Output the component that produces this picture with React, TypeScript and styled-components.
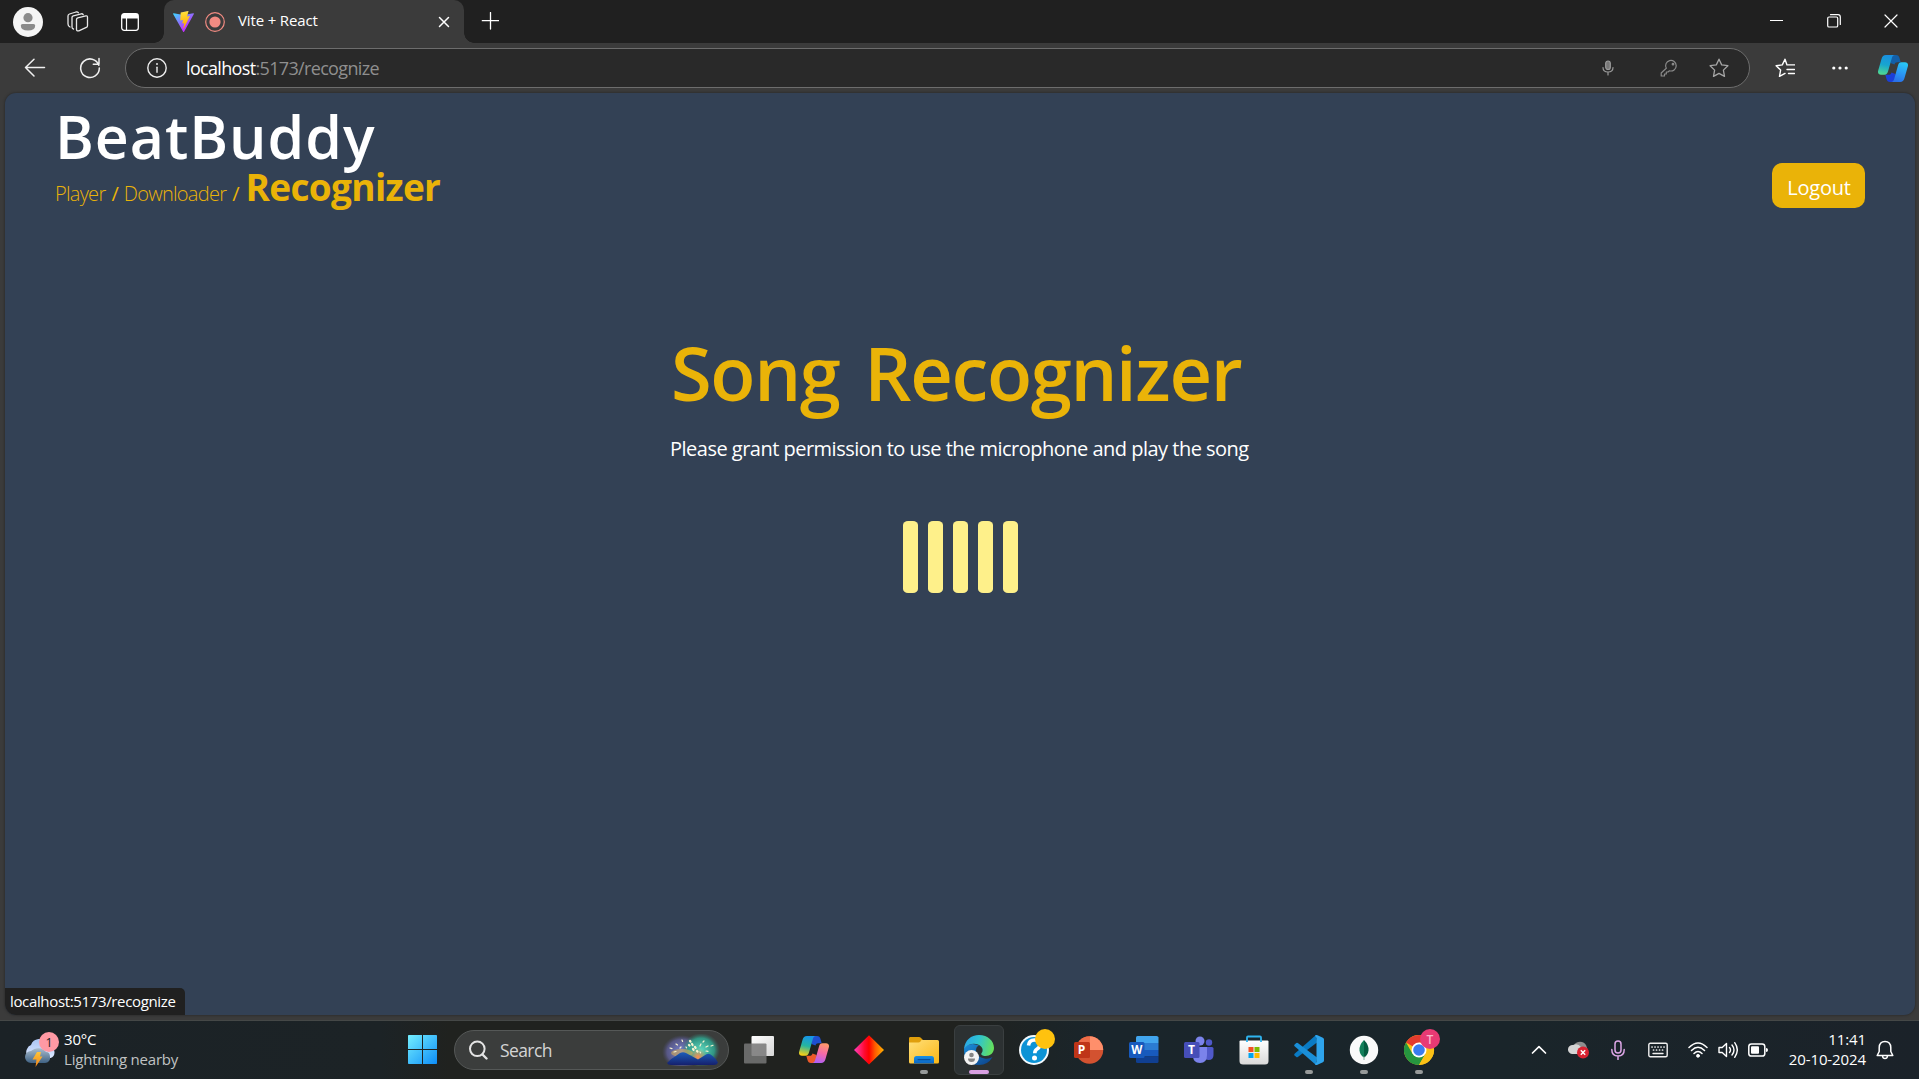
import React from 'react';
import styled, { createGlobalStyle } from 'styled-components';

const GlobalStyle = createGlobalStyle`
  * { box-sizing: border-box; }
  html, body { margin: 0; padding: 0; background: #3b3b3b; overflow: hidden; }
  body { font-family: "Open Sans", "Noto Sans", sans-serif; color: #fff; }
  svg { display: block; flex: none; }
`;

const Screen = styled.div`
  width: 1919px;
  height: 1079px;
  display: flex;
  flex-direction: column;
  background: #3b3b3b;
`;

/* ---------- browser chrome ---------- */

const TabStrip = styled.div`
  height: 43px;
  flex: none;
  background: #202020;
  display: flex;
  align-items: center;
`;

const StripTools = styled.div`
  width: 164px;
  height: 42px;
  padding-left: 13px;
  display: flex;
  align-items: center;
`;

const Tab = styled.div`
  width: 300px;
  height: 43px;
  background: #3b3b3b;
  border-radius: 10px 10px 0 0;
  display: flex;
  align-items: center;
  padding: 0 13px 0 9px;
  position: relative;
  &::before, &::after {
    content: "";
    position: absolute;
    bottom: 0;
    width: 10px;
    height: 10px;
  }
  &::before { left: -10px; background: radial-gradient(circle at 0 0, #202020 9.5px, #3b3b3b 10px); }
  &::after { right: -10px; background: radial-gradient(circle at 100% 0, #202020 9.5px, #3b3b3b 10px); }
`;

const TabTitle = styled.span`
  flex: 1;
  margin-left: 13px;
  padding-bottom: 3px;
  font-size: 15px;
  line-height: 20px;
  letter-spacing: -0.15px;
`;

const WindowControls = styled.div`
  margin-left: auto;
  display: flex;
  gap: 43.500px;
  padding-right: 21px;
  padding-bottom: 1px;
`;

const Toolbar = styled.div`
  height: 50px;
  flex: none;
  display: flex;
  align-items: center;
  padding: 0 10px 0 24px;
`;

const AddressBar = styled.div`
  width: 1625px;
  height: 40px;
  margin-left: 24px;
  border: 1px solid #6d6d6d;
  border-radius: 20px;
  background: #292929;
  display: flex;
  align-items: center;
  padding: 0 20px 0 21px;
`;

const Url = styled.span`
  flex: 1;
  margin-left: 19px;
  padding-bottom: 1px;
  font-size: 18px;
  line-height: 26px;
  letter-spacing: -0.66px;
  color: #8f8f8f;
  b { font-weight: 400; color: #fff; }
`;

const Gap = styled.span<{ $w: number }>`
  flex: none;
  width: ${(p) => p.$w}px;
`;

/* ---------- web page ---------- */

const Page = styled.div`
  width: 1910px;
  height: 922px;
  margin-left: 5px;
  flex: none;
  background: #334155;
  border-radius: 11px;
  box-shadow: 0 0 3px rgba(0, 0, 0, 0.4);
  display: flex;
  flex-direction: column;
  overflow: hidden;
`;

const Header = styled.header`
  display: flex;
  justify-content: space-between;
  align-items: flex-start;
  padding: 13px 50px 0 50px;
`;

const Brand = styled.h1`
  margin: 0;
  font-size: 59px;
  line-height: 60px;
  font-weight: 600;
  letter-spacing: 0.95px;
`;

const Crumbs = styled.nav`
  height: 44px;
  margin-top: -1px;
  display: flex;
  align-items: baseline;
  color: #eab308;
  font-size: 20px;
  line-height: 20px;
`;

const Crumb = styled.a`
  font-weight: 300;
  letter-spacing: -0.72px;
`;

const Slash = styled.span`
  margin: 0 5px 0 6px;
  font-weight: 500;
`;

const ActiveCrumb = styled.a`
  margin-left: 1px;
  font-size: 37px;
  line-height: 44px;
  font-weight: 700;
  letter-spacing: -0.68px;
`;

const Logout = styled.button`
  margin: 57px 0 0;
  padding: 4px 0 0 1px;
  width: 93px;
  height: 45px;
  border: 0;
  border-radius: 10px;
  background: #eab308;
  color: #fff;
  font: inherit;
  font-size: 20px;
  line-height: 28px;
  letter-spacing: -0.25px;
`;

const Main = styled.main`
  width: 578px;
  margin: 124px auto 0;
  display: flex;
  flex-direction: column;
`;

const Title = styled.h2`
  margin: 0;
  color: #eab308;
  font-size: 74px;
  line-height: 80px;
  font-weight: 600;
  white-space: nowrap;
  letter-spacing: -1.35px;
  word-spacing: 7px;
`;

const Hint = styled.p`
  margin: 22px 0 0 -1px;
  font-size: 20px;
  line-height: 28px;
  white-space: nowrap;
  letter-spacing: -0.51px;
`;

const Bars = styled.div`
  margin: 58px auto 0;
  display: flex;
  gap: 10px;
`;

const Bar = styled.i`
  width: 15px;
  height: 72px;
  border-radius: 5px / 4px;
  background: #fef08a;
`;

const StatusBubble = styled.div`
  width: 180px;
  height: 27px;
  margin: auto 0 0;
  padding-left: 5px;
  background: #202020;
  border-radius: 0 5px 0 0;
  font-size: 15px;
  line-height: 27px;
  letter-spacing: -0.35px;
`;

/* ---------- taskbar ---------- */

const Taskbar = styled.div`
  margin-top: 5px;
  height: 59px;
  flex: none;
  display: flex;
  align-items: center;
  padding-bottom: 1px;
  border-top: 1px solid #454847;
  background: linear-gradient(90deg, #1b2226 0, #1c2326 380px, #20221f 450px, #20221f 960px, #1a252b 1100px, #1a252a 1500px, #1b2229 100%);
`;

const Weather = styled.div`
  width: 408px;
  display: flex;
  align-items: center;
  padding-left: 24px;
`;

const WeatherText = styled.div`
  display: flex;
  flex-direction: column;
  margin-left: 4px;
  padding-bottom: 2px;
  font-size: 15px;
  line-height: 20px;
  letter-spacing: -0.2px;
  small { font-size: 15px; color: #c0c2c3; }
`;

const SearchBox = styled.div`
  width: 275px;
  height: 40px;
  margin: 0 5px 0 17px;
  border: 1px solid #555857;
  border-radius: 20px;
  background: #3b3d3c;
  display: flex;
  align-items: center;
  padding: 0 8px 0 13px;
`;

const SearchText = styled.span`
  flex: 1;
  margin-left: 12px;
  font-size: 17.5px;
  line-height: 24px;
  letter-spacing: -0.6px;
  color: #d4d4d4;
`;

const AppButton = styled.div<{ $active?: boolean }>`
  width: 50px;
  height: 50px;
  margin: 0 5px 0 0;
  border-radius: 6px;
  border: 1px solid ${(p) => (p.$active ? '#3a3f40' : 'transparent')};
  background: ${(p) => (p.$active ? '#2c3132' : 'transparent')};
  display: flex;
  flex-direction: column;
  align-items: center;
  padding-top: 8px;
`;

const Running = styled.i<{ $active?: boolean }>`
  width: ${(p) => (p.$active ? 20 : 8)}px;
  height: 4px;
  margin-top: 4px;
  border-radius: 2px;
  background: ${(p) => (p.$active ? '#d9a0e2' : '#979a9a')};
`;

const Tray = styled.div`
  margin-left: auto;
  display: flex;
  align-items: center;
  padding-right: 25px;
`;

const Clock = styled.div`
  width: 88px;
  margin: 0 10px 0 10px;
  padding-bottom: 2px;
  text-align: right;
  font-size: 15px;
  line-height: 20px;
  letter-spacing: -0.1px;
  white-space: nowrap;
  display: flex;
  flex-direction: column;
`;

const BadgeText = styled.text`
  font-family: "Open Sans", sans-serif;
  text-anchor: middle;
`;

/* ---------- icons ---------- */

const ribbon = 'M8 0h9c-2 0-2.700 1.500-3.300 3.500L10 16.500c-.6 2-1.500 3.200-3.500 3.200H3c-2.500 0-3.500-1.800-2.800-4.200L3.500 4C4.200 1.500 5.500 0 8 0z';
const fold = 'M12 0h6c2 0 3 1 3.500 3l1.200 4.300h-3.500c-1.500 0-2.200.8-2.700 2.300L12.500 8z';

const Copilot = ({ id, colours }: { id: string; colours: string[] }) => (
  <svg width="30" height="27" viewBox="0 0 30 27">
    <defs>
      <linearGradient id={id + 'a'} x1=".5" y1="0" x2=".3" y2="1">
        <stop offset="0" stopColor={colours[0]} /><stop offset=".5" stopColor={colours[1]} /><stop offset="1" stopColor={colours[2]} />
      </linearGradient>
      <linearGradient id={id + 'b'} x1=".3" y1="1" x2=".6" y2="0">
        <stop offset="0" stopColor={colours[3]} /><stop offset=".5" stopColor={colours[4]} /><stop offset="1" stopColor={colours[5]} />
      </linearGradient>
    </defs>
    <path d={fold} fill={colours[6]} />
    <path d={fold} fill={colours[7]} transform="rotate(180 15 13.500)" />
    <path d={ribbon} fill={`url(#${id}a)`} />
    <path d={ribbon} fill={`url(#${id}b)`} transform="rotate(180 15 13.500)" />
  </svg>
);

const Vite = () => (
  <svg width="21" height="21" viewBox="0 0 256 257">
    <defs>
      <linearGradient id="vA" x1="-.8%" x2="57.600%" y1="7.600%" y2="78.400%"><stop offset="0" stopColor="#41D1FF" /><stop offset="1" stopColor="#BD34FE" /></linearGradient>
      <linearGradient id="vB" x1="43.400%" x2="50.300%" y1="2.200%" y2="89%"><stop offset="0" stopColor="#FFEA83" /><stop offset=".08" stopColor="#FFDD35" /><stop offset="1" stopColor="#FFA800" /></linearGradient>
    </defs>
    <path fill="url(#vA)" d="M255.153 37.938L134.897 252.976c-2.483 4.440-8.862 4.466-11.382.048L.875 37.958c-2.746-4.814 1.371-10.646 6.827-9.670l120.385 21.517a6.537 6.537 0 0 0 2.322-.004l117.867-21.483c5.438-.991 9.574 4.796 6.877 9.620Z" />
    <path fill="url(#vB)" d="M185.432.063L96.440 17.501a3.268 3.268 0 0 0-2.634 3.014l-5.474 92.456a3.268 3.268 0 0 0 3.997 3.378l24.777-5.718c2.318-.535 4.413 1.507 3.936 3.838l-7.361 36.047c-.495 2.426 1.782 4.500 4.151 3.780l15.304-4.649c2.372-.720 4.652 1.360 4.150 3.788l-11.698 56.621c-.732 3.542 3.979 5.473 5.943 2.437l1.313-2.028l72.516-144.720c1.215-2.423-.880-5.186-3.540-4.672l-25.505 4.922c-2.396.462-4.435-1.770-3.759-4.114l16.646-57.705c.677-2.350-1.370-4.583-3.769-4.113Z" />
  </svg>
);

const Line = ({ w = 20, h = 20, c = '#fff', s = 1.3, children }: { w?: number; h?: number; c?: string; s?: number; children: React.ReactNode }) => (
  <svg width={w} height={h} viewBox={`0 0 ${w} ${h}`} fill="none" stroke={c} strokeWidth={s} strokeLinecap="round" strokeLinejoin="round">{children}</svg>
);

const WeatherIcon = () => (
  <svg width="36" height="36" viewBox="0 0 36 36">
    <defs>
      <linearGradient id="c1" x1="0" y1="0" x2="0" y2="1"><stop offset="0" stopColor="#a9c4f2" /><stop offset="1" stopColor="#dce8ff" /></linearGradient>
      <linearGradient id="c2" x1="0" y1="0" x2="0" y2="1"><stop offset="0" stopColor="#a9bccd" /><stop offset="1" stopColor="#3f6284" /></linearGradient>
      <linearGradient id="c3" x1="0" y1="0" x2="0" y2="1"><stop offset="0" stopColor="#ffc53a" /><stop offset="1" stopColor="#f08218" /></linearGradient>
    </defs>
    <g transform="translate(0 -1)">
      <path d="M8 27a6 6 0 0 1-5-9q1-3 4-4a9 9 0 0 1 16-2q7 1 7.500 9a6 6 0 0 1-4 6z" fill="url(#c1)" />
      <path d="M7 32a6 6 0 0 1 0-12 9 7 0 0 1 15 1q4 0 4 5a6 5 0 0 1-5 6z" fill="url(#c2)" />
      <path d="M13 21h4l-1 4.500h2.500L11.500 36l1-7.500H8.500z" fill="url(#c3)" />
    </g>
    <circle cx="25" cy="10" r="10" fill="#ff99a4" />
    <BadgeText x="25" y="14.500" fontSize="12.500" fill="#1b1b1b">1</BadgeText>
  </svg>
);

const Windows = () => (
  <svg width="29" height="29" viewBox="0 0 29 29">
    <defs><linearGradient id="win" gradientUnits="userSpaceOnUse" x1="0" y1="0" x2="29" y2="29"><stop offset="0" stopColor="#74effe" /><stop offset="1" stopColor="#0d8df8" /></linearGradient></defs>
    <path fill="url(#win)" d="M0 .8a.8.8 0 0 1 .8-.8H14v14H0zM15 0h13.200a.8.8 0 0 1 .8.800V14H15zM0 15h14v14H.8a.8.8 0 0 1-.8-.8zM15 15h14v13.200a.8.8 0 0 1-.8.8H15z" />
  </svg>
);

const Fireworks = () => (
  <svg width="58" height="32" viewBox="0 0 58 32">
    <defs>
      <radialGradient id="f1"><stop offset="0" stopColor="#7a86d8" /><stop offset=".75" stopColor="#5c5c92" stopOpacity=".85" /><stop offset="1" stopColor="#4a4a70" stopOpacity="0" /></radialGradient>
      <radialGradient id="f2"><stop offset="0" stopColor="#5fd9c0" /><stop offset=".7" stopColor="#2f9f8a" stopOpacity=".9" /><stop offset="1" stopColor="#3a7068" stopOpacity="0" /></radialGradient>
      <radialGradient id="f3"><stop offset="0" stopColor="#ff8a50" /><stop offset="1" stopColor="#e09a50" stopOpacity="0" /></radialGradient>
      <linearGradient id="f4" x1="0" y1="0" x2="0" y2="1"><stop offset="0" stopColor="#1c5db8" /><stop offset="1" stopColor="#15206e" /></linearGradient>
    </defs>
    <ellipse cx="20" cy="18" rx="20" ry="17" fill="url(#f1)" />
    <ellipse cx="39" cy="16" rx="19" ry="17" fill="url(#f2)" />
    <ellipse cx="20" cy="19" rx="11" ry="4" fill="#d3ab55" opacity=".6" />
    <circle cx="36" cy="23" r="9" fill="url(#f3)" />
    <path d="M5 29q4-4.500 8-6.500l5-3.500q3-1.500 6 0l12 6.500 8-5q3-2 6 1 4 3 6 7-1 2.500-4 2.500H9q-3 0-4-2z" fill="url(#f4)" />
    <g stroke="#f7f3cf" strokeWidth="1.200" strokeLinecap="round" fill="none">
      <path d="M8 14l2 .6M14 10l1.500 1M12 18l2-.5M20 6l.6 1.500M18 14l1-1M24 13l.6.8M38 12l1-2M41 8l1-1M44 13l2-1M44 17l2 .4M49 12l2-.7M38 18l.6.8" />
      <path d="M28 7l.5.7M30 10l.6 1M27 11l.5.5M33 13l.6.8M31 15l.6.8M35 17l.5.6" strokeWidth="2.200" />
    </g>
  </svg>
);

const TaskView = () => (
  <svg width="30" height="30" viewBox="0 0 30 30">
    <defs><linearGradient id="tv" x1="0" y1="0" x2="1" y2="1"><stop offset="0" stopColor="#fff" /><stop offset="1" stopColor="#d6d6d6" /></linearGradient></defs>
    <rect x="7.500" y="1" width="22.500" height="20" rx="1" fill="url(#tv)" />
    <rect x="0" y="8.500" width="22.500" height="20" rx="1" fill="#777" opacity=".85" />
  </svg>
);

const Diamond = () => (
  <svg width="30" height="30" viewBox="0 0 30 30">
    <defs><linearGradient id="dm"><stop offset="0" stopColor="#ff3fc0" /><stop offset=".35" stopColor="#ff0a30" /><stop offset=".5" stopColor="#ff0000" /><stop offset=".7" stopColor="#ff5a00" /><stop offset="1" stopColor="#ffb400" /></linearGradient></defs>
    <path d="M15 .3L30 15 15 29.600 0 15z" fill="url(#dm)" />
  </svg>
);

const Folder = () => (
  <svg width="30" height="30" viewBox="0 0 30 30">
    <defs>
      <linearGradient id="fo" x1="0" y1="0" x2="1" y2="1"><stop offset="0" stopColor="#ffe07a" /><stop offset="1" stopColor="#fbb716" /></linearGradient>
      <linearGradient id="fb" x1="0" y1="0" x2="0" y2="1"><stop offset="0" stopColor="#1a90e4" /><stop offset="1" stopColor="#0b66c3" /></linearGradient>
    </defs>
    <path d="M0 3.500C0 2.500.6 2 1.500 2H10q1 0 1.800.8L14 5v6H0z" fill="#e09f0c" />
    <path d="M0 7.500h9.500q1 0 1.800-.8L12.500 5H28.500q1.500 0 1.500 1.500V27q0 1.500-1.500 1.500h-27Q0 28.500 0 27z" fill="url(#fo)" />
    <path d="M5 28.500V23.500Q5 21 7.500 21h15q2.500 0 2.500 2.500v5z" fill="url(#fb)" />
    <rect x="8.500" y="24" width="13" height="1.300" rx=".6" fill="#0a4f9c" />
  </svg>
);

const Edge = () => (
  <svg width="30" height="30" viewBox="0 0 30 30">
    <defs>
      <linearGradient id="e1" x1="0" y1=".3" x2="1" y2=".5"><stop offset="0" stopColor="#2aa5e8" /><stop offset=".45" stopColor="#2ec3d2" /><stop offset="1" stopColor="#66e05a" /></linearGradient>
      <linearGradient id="e2" x1="0" y1="0" x2="1" y2="1"><stop offset="0" stopColor="#1b8fdc" /><stop offset="1" stopColor="#0c3f86" /></linearGradient>
    </defs>
    <path d="M0 15q0 15 15 15 9 0 13.500-8-4 2.500-8 1.500-8-1.500-8.500-8 0-4 3-5-7-3-12 0-3 2-3 4.500z" fill="url(#e2)" />
    <path d="M0 14C1 5 7 0 15 0c9 0 15 6 15 13 0 5-4 8-8.500 8-3 0-5-1.500-4-2.700 1.600-1.800 1.500-4.600 0-6.300C13 7 4 8 0 14z" fill="url(#e1)" />
    <circle cx="7.500" cy="22.500" r="7.500" fill="#f4f4f4" />
    <circle cx="7.500" cy="20" r="2.300" fill="#858585" />
    <path d="M4 23.500h7q0 3.500-3.500 3.500T4 23.500z" fill="#858585" />
  </svg>
);

const Help = () => (
  <svg width="36" height="36" viewBox="0 0 36 36">
    <circle cx="15" cy="21" r="15" fill="#f4fafd" />
    <circle cx="15" cy="21" r="13" fill="#0c93d6" />
    <path d="M9.500 16.500q.6-5.500 6-5.500 5.500 0 5.500 4.600 0 2.900-3.200 4.700-2 1.200-2 4" fill="none" stroke="#fff" strokeWidth="3.600" />
    <circle cx="15.500" cy="29" r="2.500" fill="#fff" />
    <circle cx="26" cy="10" r="10" fill="#ffc20e" />
  </svg>
);

const PowerPoint = () => (
  <svg width="30" height="30" viewBox="0 0 30 30">
    <circle cx="15.500" cy="15" r="13.700" fill="#d35230" />
    <path d="M15.500 1.300A13.700 13.700 0 0 1 29.200 15H15.500z" fill="#ff8f6b" />
    <path d="M15.500 1.300A13.700 13.700 0 0 0 1.800 15h13.700z" fill="#ed6c47" />
    <rect x="0" y="7" width="16" height="16" rx="1.500" fill="#bf3518" />
    <BadgeText x="7.500" y="19.300" fontSize="12" fontWeight="700" fill="#fff">P</BadgeText>
  </svg>
);

const Word = () => (
  <svg width="30" height="30" viewBox="0 0 30 30">
    <path d="M7 2.500Q7 1 8.500 1h19Q29.500 1 29.500 2.500V8H7z" fill="#41a5ee" />
    <path d="M7 8h22.500v7H7z" fill="#2b7cd3" /><path d="M7 15h22.500v6.500H7z" fill="#185abd" />
    <path d="M7 21.500h22.500v5q0 1.500-1.500 1.500H8.500Q7 28 7 26.500z" fill="#103f91" />
    <rect x="0" y="7" width="15.500" height="16" rx="1.500" fill="#185abd" />
    <BadgeText x="7.700" y="19" fontSize="11.500" fontWeight="700" fill="#fff">W</BadgeText>
  </svg>
);

const Teams = () => (
  <svg width="30" height="30" viewBox="0 0 30 30">
    <circle cx="25" cy="7.500" r="3.200" fill="#5059c9" />
    <path d="M20 12h8q1.500 0 1.500 1.500V20q0 5-5 5-3 0-4.500-2z" fill="#5059c9" />
    <circle cx="16" cy="6" r="4.500" fill="#7b83eb" />
    <path d="M10 12h13v8q0 8-7 8t-7-7z" fill="#7b83eb" />
    <rect x="0" y="7" width="15.500" height="16" rx="1.500" fill="#464eb8" />
    <BadgeText x="7.600" y="19.200" fontSize="12" fontWeight="700" fill="#fff">T</BadgeText>
  </svg>
);

const Store = () => (
  <svg width="30" height="30" viewBox="0 0 30 30">
    <defs><linearGradient id="st" x1="0" y1="0" x2="0" y2="1"><stop offset="0" stopColor="#fff" /><stop offset="1" stopColor="#d9d9d9" /></linearGradient></defs>
    <path d="M.5 6.500q0-1 1-1h27q1 0 1 1V26q0 3.500-3.500 3.500H4Q.5 29.500.5 26z" fill="url(#st)" />
    <path d="M8 7V2.500q0-1 1-1h12q1 0 1 1V7" fill="none" stroke="#2fb5f0" strokeWidth="1.800" />
    <path d="M9.500 12h5v5h-5z" fill="#f25022" /><path d="M15.500 12h5v5h-5z" fill="#7fba00" />
    <path d="M9.500 18h5v5h-5z" fill="#00a4ef" /><path d="M15.500 18h5v5h-5z" fill="#ffb900" />
  </svg>
);

const VSCode = () => (
  <svg width="30" height="30" viewBox="0 0 30 30">
    <path d="M22 0L.6 18.800q-.8.8 0 1.600l1.700 1.500q.7.500 1.500 0L23 7.500z" fill="#0a7bc4" />
    <path d="M22 30L.6 11.200q-.8-.8 0-1.600l1.700-1.500q.7-.5 1.500 0L23 22.500z" fill="#1a8fd8" />
    <path d="M21.500 29.800q1 .4 2 0l5.400-2.600q1.100-.6 1.100-1.800V4.600q0-1.200-1.100-1.800L23.500.2Q22-.4 21 .7L22.500 3v24L21 29.300z" fill="#2ea4ec" />
  </svg>
);

const Mongo = () => (
  <svg width="30" height="30" viewBox="0 0 30 30">
    <circle cx="15" cy="15" r="14.200" fill="#fafafa" />
    <path d="M15 5q-5 5-4.500 10.500Q11 20 15 22.500z" fill="#12805a" />
    <path d="M15 5q5 5 4.500 10.500Q19 20 15 22.500z" fill="#055c40" />
    <path d="M14.600 21h.8v4h-.8z" fill="#6aa58c" />
  </svg>
);

const Chrome = () => (
  <svg width="36" height="36" viewBox="0 0 36 36">
    <circle cx="15" cy="21" r="15" fill="#fbc116" />
    <path d="M15 21L2 13.500A15 15 0 0 1 28 13.500H15z" fill="#e33b2e" />
    <path d="M2 13.500A15 15 0 0 0 15 36l6.500-11.250L8.500 24.750z" fill="#26963f" />
    <path d="M28 13.500A15 15 0 0 1 15 36l6.500-11.250V13.500z" fill="#fbc116" />
    <circle cx="15" cy="21" r="7.500" fill="#fff" />
    <circle cx="15" cy="21" r="5.800" fill="#3a7cf0" />
    <circle cx="26" cy="10" r="10" fill="#e73a74" />
    <BadgeText x="26" y="14.500" fontSize="12" fontWeight="600" fill="#f9b6cc">T</BadgeText>
  </svg>
);

const Mic = ({ c }: { c: string }) => (
  <Line w={14} h={20} c={c} s={1.500}>
    <rect x="4" y="1" width="6" height="12" rx="3" />
    <path d="M.8 9.500q0 6.500 6.200 6.500t6.200-6.500M7 16v3.500" />
  </Line>
);

const star = 'M10 1.200l2.700 5.700 6.200.8-4.500 4.400 1.100 6.300L10 15.400l-5.500 3 1.100-6.300L1.100 7.700l6.200-.8z';

/* ---------- screen ---------- */

const apps: { icon: React.ReactNode; running?: boolean; active?: boolean; badged?: boolean }[] = [
  { icon: <TaskView /> },
  { icon: <Copilot id="cc" colours={['#1794e8', '#25b5a0', '#ffd012', '#ff9a6a', '#f56aa8', '#b060f5', '#1f4fd0', '#ee5a2a']} /> },
  { icon: <Diamond /> },
  { icon: <Folder />, running: true },
  { icon: <Edge />, running: true, active: true },
  { icon: <Help />, badged: true },
  { icon: <PowerPoint /> },
  { icon: <Word /> },
  { icon: <Teams /> },
  { icon: <Store /> },
  { icon: <VSCode />, running: true },
  { icon: <Mongo />, running: true },
  { icon: <Chrome />, running: true, badged: true },
];

/* Badged icons overhang the 30px slot at the top right. */
const IconSlot = styled.div`
  width: 30px;
  height: 32px;
  flex: none;
  display: flex;
  align-items: center;
`;
const BadgedSlot = styled(IconSlot)`
  align-items: flex-start;
  svg { margin-top: -5px; }
`;

export default function App() {
  return (
    <Screen>
      <GlobalStyle />
      <TabStrip>
        <StripTools>
          <svg width="30" height="30" viewBox="0 0 30 30">
            <circle cx="15" cy="15" r="15" fill="#f5f5f5" />
            <circle cx="15" cy="10.700" r="4.600" fill="#8b8b8b" />
            <path d="M9.500 17h11q1.700 0 1.700 1.500 0 5-7.200 5t-7.200-5Q7.800 17 9.500 17z" fill="#8b8b8b" />
          </svg>
          <Gap $w={24} />
          <Line w={22} h={22} c="#e8e8e8">
            <path d="M9.500 8.500q0-1.300 1.300-1.700l8-1.900q1.700-.3 1.700 1.300v8.500q0 1.200-1.200 1.700l-7.500 3.400q-2.300.6-2.300-1.600z" />
            <path d="M6.500 18q-1.500-.3-1.500-2V6.500q0-1.300 1.300-1.700l8-2q1.200-.2 1.900.9" />
            <path d="M3 16q-2-1-2-3V5q0-1.500 1.500-2l6.500-2q1.700-.4 2.400.8" />
          </Line>
          <Gap $w={32} />
          <svg width="18" height="18" viewBox="0 0 18 18">
            <rect x=".7" y=".7" width="16.600" height="16.600" rx="2.500" fill="none" stroke="#fff" strokeWidth="1.300" />
            <path d="M1 1h16v4.500H1z" fill="#fff" /><path d="M5.500 5v12" stroke="#fff" strokeWidth="1.200" />
          </svg>
        </StripTools>
        <Tab>
          <Vite />
          <Gap $w={11} />
          <svg width="20" height="20" viewBox="0 0 20 20">
            <circle cx="10" cy="10" r="9.300" fill="none" stroke="#f28b82" strokeWidth="1.200" />
            <circle cx="10" cy="10" r="5.600" fill="#f28b82" />
          </svg>
          <TabTitle>Vite + React</TabTitle>
          <Line w={14} h={14} s={1.500}><path d="M2.500 2.500l9 9M11.500 2.500l-9 9" /></Line>
        </Tab>
        <Gap $w={17} />
        <Line w={18} h={19} s={1.300}><path d="M9.500 .5v16.500M1.300 8.700h16.400" /></Line>
        <WindowControls>
          <Line w={13} h={13} s={1}><path d="M0 6.500h13" /></Line>
          <Line w={14} h={14} s={1.200}><rect x=".7" y="3" width="10" height="10" rx="1.300" /><path d="M3.500.7h7.500q2.300 0 2.300 2.300v7.500" /></Line>
          <Line w={14} h={14} s={1.200}><path d="M1 1l12 12M13 1L1 13" /></Line>
        </WindowControls>
      </TabStrip>

      <Toolbar>
        <Line w={22} h={20} c="#f0f0f0" s={1.500}><path d="M20.500 9.500H1.500M10 1.200L1.500 9.500l8.500 8.500" /></Line>
        <Gap $w={33} />
        <Line w={22} h={22} c="#f0f0f0" s={1.500}><path d="M19.800 8.200A9.300 9.300 0 1 0 20.300 11M20 1.500v5.700h-5.700" /></Line>
        <AddressBar>
          <Line s={1.400} c="#eee"><circle cx="10" cy="10" r="9.200" /><path d="M10 9.200v5" /><path d="M10 6v.1" strokeWidth="1.900" /></Line>
          <Url><b>localhost</b>:5173/recognize</Url>
          <Line w={12} h={16} c="#9b9b9b" s={1.200}><rect x="3.700" y="1" width="4.600" height="8.500" rx="2.300" fill="#777" /><path d="M1 7.500q0 4.500 5 4.500t5-4.500M6 12v3" /></Line>
          <Gap $w={46} />
          <Line w={18} h={18} c="#8b8b8b" s={1.200}><path d="M6.300 9.300A5.300 5.300 0 1 1 9.500 11.800L8 13H6.300v2H4.500v2H1.200v-3z" /><circle cx="13" cy="5.200" r=".8" fill="#8b8b8b" /></Line>
          <Gap $w={31} />
          <Line w={20} h={20} c="#a5a5a5" s={1.300}><path d={star} /></Line>
        </AddressBar>
        <Gap $w={25} />
        <Line w={20} h={20} c="#fff" s={1.400}><path d="M12 6.900L10 1.200 7.300 6.900l-6.200.8 4.500 4.400-1.100 6.300L10 15.400M13 6.900h6.500M12 11.500h7.500M13.500 15.500h6" /></Line>
        <Gap $w={37} />
        <svg width="16" height="4" viewBox="0 0 16 4" fill="#fff"><circle cx="1.800" cy="2" r="1.600" /><circle cx="8" cy="2" r="1.600" /><circle cx="14.200" cy="2" r="1.600" /></svg>
        <Gap $w={30} />
        <Copilot id="ct" colours={['#1a8fe0', '#17a5cf', '#50d890', '#28c8f5', '#2a9cf5', '#2a70e8', '#135fa8', '#1b3fd8']} />
      </Toolbar>

      <Page>
        <Header>
          <div>
            <Brand>BeatBuddy</Brand>
            <Crumbs>
              <Crumb>Player</Crumb><Slash>/</Slash><Crumb>Downloader</Crumb><Slash>/</Slash>
              <ActiveCrumb>Recognizer</ActiveCrumb>
            </Crumbs>
          </div>
          <Logout>Logout</Logout>
        </Header>
        <Main>
          <Title>Song Recognizer</Title>
          <Hint>Please grant permission to use the microphone and play the song</Hint>
          <Bars>{[0, 1, 2, 3, 4].map((n) => <Bar key={n} />)}</Bars>
        </Main>
        <StatusBubble>localhost:5173/recognize</StatusBubble>
      </Page>

      <Taskbar>
        <Weather>
          <WeatherIcon />
          <WeatherText><span>30°C</span><small>Lightning nearby</small></WeatherText>
        </Weather>
        <Windows />
        <SearchBox>
          <Line w={20} h={20} c="#e4e4e4" s={2}><circle cx="9.300" cy="8.800" r="7.300" /><path d="M14.500 14.500l4 4" strokeWidth="2.400" /></Line>
          <SearchText>Search</SearchText>
          <Fireworks />
        </SearchBox>
        {apps.map((a, i) => {
          const Slot = a.badged ? BadgedSlot : IconSlot;
          return (
            <AppButton key={i} $active={a.active}>
              <Slot>{a.icon}</Slot>
              {a.running && <Running $active={a.active} />}
            </AppButton>
          );
        })}
        <Tray>
          <Line w={16} h={10} s={1.700}><path d="M1.500 8L8 1.700 14.500 8" /></Line>
          <Gap $w={21} />
          <svg width="22" height="18" viewBox="0 0 22 18">
            <path d="M6 4q3-4 8-3 4 1 5 6l-6 4z" fill="#8f8f8f" />
            <path d="M4 13a4.500 4.500 0 0 1 1-9q5-2 8 2l3 7z" fill="#d4d4d4" />
            <circle cx="15" cy="11.500" r="6" fill="#d92231" />
            <path d="M12.800 9.300l4.400 4.400M17.200 9.300l-4.400 4.400" stroke="#fff" strokeWidth="1.400" />
          </svg>
          <Gap $w={21} />
          <Mic c="#dda6e6" />
          <Gap $w={23} />
          <Line w={20} h={16} s={1.400} c="#f0f0f0">
            <rect x=".8" y="1.200" width="18.400" height="13.600" rx="1.500" />
            <path d="M4 5h.1M7 5h.1M10 5h.1M13 5h.1M16 5h.1M5.500 8h.1M8.500 8h.1M11.500 8h.1M14.500 8h.1" strokeWidth="1.700" />
            <path d="M5 11.500h10" />
          </Line>
          <Gap $w={20} />
          <Line w={20} h={18} s={1.500}>
            <path d="M1 6.500q9-9 18 0M3.500 9.500q6.500-6.500 13 0M6 12.500q4-4 8 0" /><circle cx="10" cy="14.800" r="1.500" fill="#fff" strokeWidth=".8" />
          </Line>
          <Gap $w={10} />
          <Line w={20} h={18} s={1.400}>
            <path d="M1 6.500h3.200L8.500 2.500v13L4.200 11.500H1zM11.500 6.500q2 2.500 0 5M14 4q4 5 0 10M16.700 1.700q5.200 7.300 0 14.600" />
          </Line>
          <Gap $w={10} />
          <svg width="20" height="14" viewBox="0 0 20 14">
            <rect x=".8" y="1" width="16" height="12" rx="2.600" fill="none" stroke="#fff" strokeWidth="1.500" />
            <rect x="3" y="3.200" width="8" height="7.600" rx="1" fill="#fff" /><path d="M18 5q2 0 2 2t-2 2z" fill="#fff" />
          </svg>
          <Clock><span>11:41</span><span>20-10-2024</span></Clock>
          <Line w={18} h={20} s={1.500}><path d="M9 1.500q-5.500 0-5.800 6v4L1.200 15.500h15.600l-2-4v-4Q14.500 1.500 9 1.500zM6.500 16q.4 2.600 2.500 2.600t2.500-2.600" /></Line>
        </Tray>
      </Taskbar>
    </Screen>
  );
}
